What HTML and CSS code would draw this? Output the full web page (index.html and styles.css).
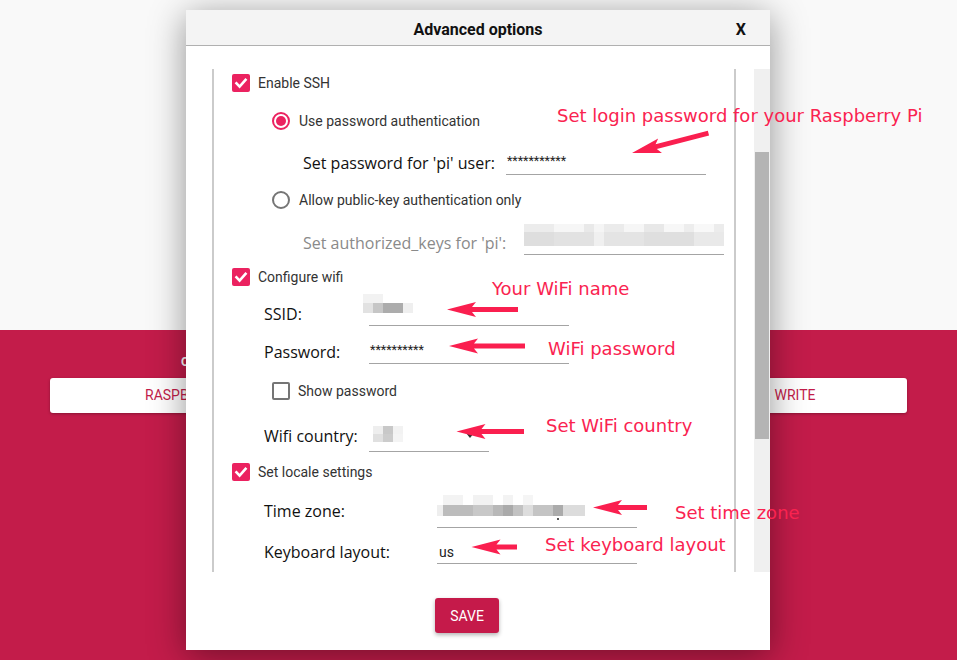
FILE: index.html
```html
<!DOCTYPE html>
<html>
<head>
<meta charset="utf-8">
<title>Advanced options</title>
<link rel="stylesheet" href="styles.css">
</head>
<body>
<div class="app">
  <div class="top"></div>
  <div class="bottom">
    <div class="col col-os">
      <div class="col-label">OPERATING SYSTEM</div>
      <div class="btn btn-os">RASPBERRY PI OS (32-BIT)</div>
    </div>
    <div class="col col-write">
      <div class="col-label">&nbsp;</div>
      <div class="btn btn-write">WRITE</div>
    </div>
  </div>
</div>

<div class="modal">
  <div class="modal-head">
    <span></span>
    <span class="modal-title">Advanced options</span>
    <span class="modal-close">X</span>
  </div>
  <div class="modal-body">
    <div class="frame">
      <div class="row cb-row r1">
        <span class="cb checked"><svg viewBox="0 0 18 18" width="18" height="18"><path d="M3.6 8.4 L7.6 12.6 L14.4 4.8" fill="none" stroke="#fff" stroke-width="2.6"/></svg></span>
        <span class="cb-label">Enable SSH</span>
      </div>
      <div class="row radio-row r2">
        <span class="radio on"></span>
        <span class="cb-label">Use password authentication</span>
      </div>
      <div class="row field ssh-field r3">
        <span class="flabel">Set password for 'pi' user:</span>
        <div class="inp inp-ssh"><span class="stars">***********</span></div>
      </div>
      <div class="row radio-row r4">
        <span class="radio"></span>
        <span class="cb-label">Allow public-key authentication only</span>
      </div>
      <div class="row field ssh-field r5">
        <span class="flabel dim">Set authorized_keys for 'pi':</span>
        <div class="inp inp-ssh inp-keys"><div class="blur blur-keys"></div></div>
      </div>
      <div class="row cb-row r6">
        <span class="cb checked"><svg viewBox="0 0 18 18" width="18" height="18"><path d="M3.6 8.4 L7.6 12.6 L14.4 4.8" fill="none" stroke="#fff" stroke-width="2.6"/></svg></span>
        <span class="cb-label">Configure wifi</span>
      </div>
      <div class="row field wifi-field r7">
        <span class="flabel">SSID:</span>
        <div class="inp"><div class="blur blur-ssid"></div></div>
      </div>
      <div class="row field wifi-field r8">
        <span class="flabel">Password:</span>
        <div class="inp"><span class="stars">**********</span></div>
      </div>
      <div class="row cb-row sub r9">
        <span class="cb"></span>
        <span class="cb-label">Show password</span>
      </div>
      <div class="row field wifi-field r10">
        <span class="flabel">Wifi country:</span>
        <div class="inp inp-combo"><div class="blur blur-country"></div><span class="combo-arrow"></span></div>
      </div>
      <div class="row cb-row r11">
        <span class="cb checked"><svg viewBox="0 0 18 18" width="18" height="18"><path d="M3.6 8.4 L7.6 12.6 L14.4 4.8" fill="none" stroke="#fff" stroke-width="2.6"/></svg></span>
        <span class="cb-label">Set locale settings</span>
      </div>
      <div class="row field locale-field r12">
        <span class="flabel">Time zone:</span>
        <div class="inp"><div class="blur blur-tz"></div><span class="tz-dot"></span></div>
      </div>
      <div class="row field locale-field r13">
        <span class="flabel">Keyboard layout:</span>
        <div class="inp"><span class="val">us</span></div>
      </div>
    </div>
    <div class="scrollbar"><div class="thumb"></div></div>
  </div>
  <div class="modal-foot">
    <button class="save">SAVE</button>
  </div>
</div>

<div class="note n-login">Set login password for your Raspberry Pi</div>
<div class="note n-ssid">Your WiFi name</div>
<div class="note n-pass">WiFi password</div>
<div class="note n-country">Set WiFi country</div>
<div class="note n-tz">Set time zone</div>
<div class="note n-kb">Set keyboard layout</div>

<svg class="arrows" width="957" height="660" viewBox="0 0 957 660">
  <g fill="#fa1f4f">
    <polygon transform="rotate(-14.6 632 153)" points="632,153 661,145.5 657,150.5 711,150.5 711,155.5 657,155.5 661,160.5"/>
    <polygon points="447,309.5 476,302 472,307 518,307 518,312 472,312 476,317"/>
    <polygon points="449,346 478,338.5 474,343.5 525,343.5 525,348.5 474,348.5 478,353.5"/>
    <polygon points="456.5,431.5 485.5,424 481.5,429 524,429 524,434 481.5,434 485.5,439"/>
    <polygon points="593,507.5 622,500 618,505 647,505 647,510 618,510 622,515"/>
    <polygon points="471.5,547 500.5,539.5 496.5,544.5 517,544.5 517,549.5 496.5,549.5 500.5,554.5"/>
  </g>
</svg>
</body>
</html>
```
FILE: styles.css
```css
* { box-sizing: border-box; }
html, body { margin: 0; padding: 0; }
body {
  width: 957px;
  height: 660px;
  overflow: hidden;
  position: relative;
  font-family: Roboto, "Liberation Sans", sans-serif;
  background: #f9f9f9;
}

/* background app */
.top { height: 330px; background: #f9f9f9; }
.bottom {
  height: 330px;
  background: #c31c4a;
  display: flex;
  justify-content: space-between;
  padding: 24px 50px 0;
}
.col { display: flex; flex-direction: column; }
.col-os { width: 200px; }
.col-write { width: 224px; }
.col-label {
  height: 16px;
  line-height: 16px;
  margin-bottom: 8px;
  color: #fff;
  font-weight: 700;
  font-size: 12px;
  white-space: nowrap;
}
.col-os .col-label { padding-left: 131px; }
.btn {
  height: 35px;
  line-height: 35px;
  background: #fff;
  border-radius: 3px;
  color: #c31c4a;
  font-size: 14px;
  white-space: nowrap;
  box-shadow: 0 1px 3px rgba(0,0,0,0.3);
}
.btn-os { padding-left: 95px; }
.btn-write { text-align: center; }

/* modal */
.modal {
  position: absolute;
  left: 186px;
  top: 10px;
  width: 584px;
  height: 640px;
  background: #fff;
  box-shadow: 0 6px 34px rgba(0,0,0,0.42);
  display: flex;
  flex-direction: column;
}
.modal-head {
  height: 36px;
  padding-top: 4px;
  background: #f4f4f4;
  border-bottom: 1px solid #b0b0b0;
  display: grid;
  grid-template-columns: 1fr auto 1fr;
  align-items: center;
  font-weight: 700;
  font-size: 16px;
  color: #111;
}
.modal-close { justify-self: end; padding-right: 24px; }
.modal-body {
  display: flex;
  padding: 23px 0 0 26px;
}
.frame {
  width: 524px;
  height: 503px;
  border-left: 2px solid #cbcbcb;
  border-right: 2px solid #cbcbcb;
  padding: 0 0 0 18px;
}
.scrollbar {
  width: 16px;
  height: 503px;
  margin-left: 18px;
  background: #f0f0f0;
  padding: 83px 1px 0;
}
.thumb { height: 287px; background: #b4b4b4; }

.modal-foot { padding: 26px 0 0 249px; }
.save {
  width: 64px;
  height: 35px;
  border: 0;
  border-radius: 3px;
  background: #c51a4a;
  color: #fff;
  font-family: Roboto, sans-serif;
  font-size: 14px;
  padding: 0;
  box-shadow: 0 2px 4px rgba(0,0,0,0.3);
}

/* rows */
.row { display: flex; align-items: center; }
.cb-row { height: 27px; }
.radio-row { height: 28px; margin-left: 40px; }
.r1 { margin-top: 0; }
.r2 { margin-top: 11px; }
.r3 { margin-top: 16px; height: 24px; }
.r4 { margin-top: 12px; height: 26px; }
.r5 { margin-top: 18px; height: 24px; }
.r6 { margin-top: 8px; }
.r7 { margin-top: 12px; height: 24px; }
.r8 { margin-top: 14px; height: 24px; }
.r9 { margin-top: 14px; height: 26px; }
.r10 { margin-top: 16px; height: 32px; }
.r11 { margin-top: 6px; }
.r12 { margin-top: 9px; height: 34px; }
.r13 { margin-top: 12px; height: 24px; }

.cb {
  width: 18px;
  height: 18px;
  border-radius: 2px;
  border: 2px solid #757575;
  margin-right: 8px;
  flex: none;
}
.cb.checked {
  border: 0;
  background: #eb2260;
}
.cb svg { display: block; }
.sub { margin-left: 40px; }
.cb-label { font-size: 14px; color: #333; white-space: nowrap; }
.radio {
  width: 18px;
  height: 18px;
  border-radius: 50%;
  border: 2px solid #757575;
  margin-right: 9px;
  flex: none;
  display: flex;
  align-items: center;
  justify-content: center;
}
.radio.on { border-color: #eb2260; }
.radio.on::after {
  content: "";
  width: 10px;
  height: 10px;
  border-radius: 50%;
  background: #eb2260;
}

.flabel {
  font-family: "Open Sans", Lato, sans-serif;
  font-size: 16px;
  line-height: 20px;
  color: #111;
  white-space: nowrap;
  flex: none;
}
.flabel.dim { color: #8a8a8a; }
.ssh-field { margin-left: 71px; }
.ssh-field .inp { margin-left: 11px; }
.ssh-field .inp-keys { margin-left: 18px; }
.wifi-field { margin-left: 32px; }
.wifi-field .flabel { width: 105px; }
.locale-field { margin-left: 32px; }
.locale-field .flabel { width: 173px; }

.inp {
  position: relative;
  width: 200px;
  height: 100%;
  border-bottom: 1px solid #a4a4a4;
  display: flex;
  align-items: center;
  font-size: 14px;
  color: #222;
}
.inp-combo { width: 120px; }
.stars { padding-left: 1px; padding-bottom: 5px; font-size: 12.5px; color: #222; }
.val { padding-left: 2px; color: #222; }

.blur { position: absolute; }
.blur-keys {
  left: 0; top: -7px; width: 200px; height: 22px;
  background:
    linear-gradient(to right, #ececec 0 30px, #f6f6f6 30px 60px, #e9e9e9 60px 70px, #f5f5f5 70px 80px, #ebebeb 80px 100px, #f6f6f6 100px 120px, #e8e8e8 120px 140px, #f7f7f7 140px 160px, #ededed 160px 170px, #f8f8f8 170px 190px, #ececec 190px 200px) top / 200px 8px no-repeat,
    linear-gradient(to right, #dedede 0 30px, #e2e2e2 30px 70px, #f0f0f0 70px 80px, #e4e4e4 80px 120px, #dfdfdf 120px 170px, #e9e9e9 170px 200px) bottom / 200px 14px no-repeat;
}
.blur-ssid {
  left: -6px; top: -8px; width: 50px; height: 19px;
  background:
    linear-gradient(to right, #f2f2f2 0 20px, transparent 20px) top / 50px 9px no-repeat,
    linear-gradient(to right, #e2e2e2 0 10px, #c6c6c6 10px 20px, #acacac 20px 40px, #efefef 40px 50px) bottom / 50px 10px no-repeat;
}
.blur-country {
  left: 4px; top: 6px; width: 30px; height: 16px;
  background:
    linear-gradient(to right, #eeeeee 0 10px, #c8c8c8 10px 20px, #f2f2f2 20px 30px) top / 30px 8px no-repeat,
    linear-gradient(to right, #e0e0e0 0 10px, #cccccc 10px 20px, #f4f4f4 20px 30px) bottom / 30px 8px no-repeat;
}
.combo-arrow {
  position: absolute;
  left: 97px; top: 13px;
  width: 0; height: 0;
  border-left: 4px solid transparent;
  border-right: 4px solid transparent;
  border-top: 5px solid #333;
}
.blur-tz {
  left: 0; top: 1px; width: 148px; height: 21px;
  background:
    linear-gradient(to right, transparent 0 6px, #f3f3f3 6px 26px, transparent 26px 36px, #f2f2f2 36px 56px, transparent 56px 66px, #f3f3f3 66px 76px, transparent 76px 86px, #f5f5f5 86px 96px, transparent 96px) top / 148px 10px no-repeat,
    linear-gradient(to right, #eeeeee 0 6px, #bcbcbc 6px 36px, #c8c8c8 36px 56px, #b8b8b8 56px 66px, #aaaaaa 66px 76px, #c2c2c2 76px 86px, #dddddd 86px 96px, #c4c4c4 96px 116px, #ababab 116px 126px, #dcdcdc 126px 148px) bottom / 148px 11px no-repeat;
}
.tz-dot {
  position: absolute;
  left: 120px; top: 24px;
  width: 2px; height: 2px;
  background: #555;
}

/* annotations */
.note {
  position: absolute;
  font-family: "DejaVu Sans", sans-serif;
  font-size: 18px;
  line-height: 18px;
  color: #fa2350;
  white-space: nowrap;
}
.n-login { left: 557px; top: 107px; }
.n-ssid { left: 492px; top: 280px; }
.n-pass { left: 548px; top: 340px; }
.n-country { left: 546px; top: 417px; }
.n-tz { left: 675px; top: 504px; }
.n-kb { left: 545px; top: 536px; }

.arrows { position: absolute; left: 0; top: 0; pointer-events: none; }
```
